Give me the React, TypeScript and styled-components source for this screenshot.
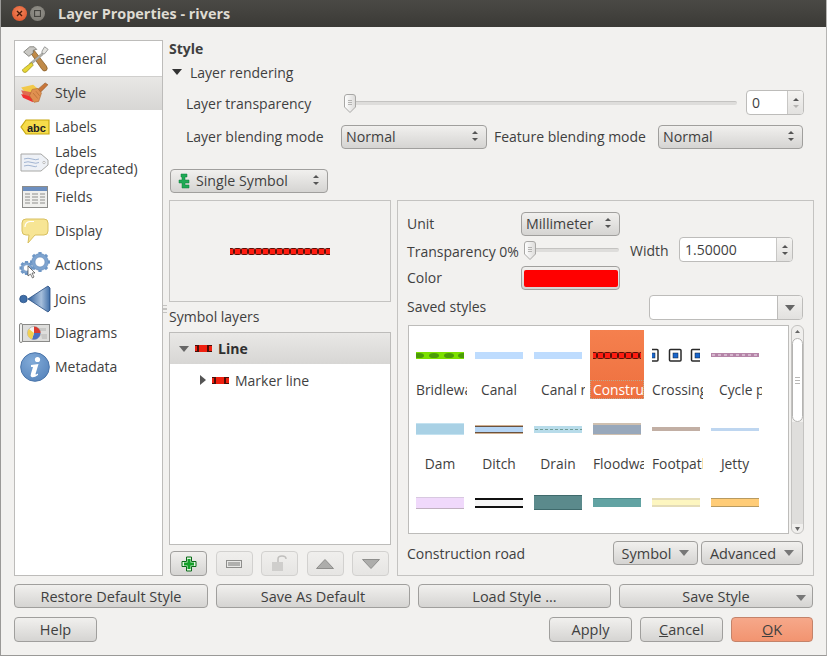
import React from "react";
import styled, { createGlobalStyle } from "styled-components";

const Global = createGlobalStyle`
html, body { margin: 0; padding: 0; background: #f2f1ef; }
* { box-sizing: border-box; }
`

const Win = styled.div`
width: 827px;
height: 656px;
display: flex;
flex-direction: column;
overflow: hidden;
background: #f2f1ef;
border-left: 1px solid #9a9997;
border-right: 1px solid #b5b4b2;
border-bottom: 1px solid #9a9997;
font-family: "Open Sans", "Noto Sans", sans-serif;
font-size: 14px;
color: #3f3f3f;
`
const TitleBar = styled.div`
height: 27px;
margin: 0 -1px;
flex: none;
display: flex;
align-items: center;
padding-left: 12px;
background: linear-gradient(#4a4945, #3b3a36);
`
const WinDot = styled.div<{ $close?: boolean }>`
width: 15px;
height: 15px;
border-radius: 50%;
margin-right: 3px;
display: flex;
align-items: center;
justify-content: center;
background: ${p => p.$close ? "radial-gradient(circle at 50% 40%, #f28a5f, #dd4a22)" : "radial-gradient(circle at 50% 40%, #94928b, #7a7871)"};
`
const Title = styled.div`
margin-left: 10px;
font-weight: 700;
font-size: 14.4px;
color: #dfdbd2;
`
const Body = styled.div`
flex: 1;
display: flex;
flex-direction: column;
padding: 13px 13px 0 13px;
`
const Main = styled.div`
display: flex;
height: 536px;
`
const SideList = styled.div`
width: 149px;
flex: none;
padding-top: 1px;
background: #fff;
border: 1px solid #bdbcba;
`
const SideItem = styled.div<{ $active?: boolean; $tall?: boolean }>`
height: ${p => p.$tall ? 36 : 34}px;
display: flex;
align-items: center;
gap: 4px;
padding-left: 3px;
line-height: 17px;
${p => p.$active && "background: linear-gradient(#e8e7e5, #d8d7d5); border-top: 1px solid #d0cfcd;"}
`
const IconBox = styled.div`
width: 33px;
height: 32px;
flex: none;
display: flex;
align-items: center;
justify-content: center;
`
const PageName = styled.div<{ $tall?: boolean }>`
white-space: pre-line;
padding-bottom: ${p => p.$tall ? 4 : 2}px;
`
const Right = styled.div`
flex: 1;
margin-left: 6px;
display: flex;
flex-direction: column;
`
const Heading = styled.div`
height: 18px;
font-weight: 700;
line-height: 18px;
`
const Collapse = styled.div`
margin-top: 5px;
height: 20px;
display: flex;
align-items: center;
gap: 8px;
padding: 0 0 2px 3px;
`
const DownTri = styled.div<{ $color?: string }>`
width: 0;
height: 0;
border-left: 5px solid transparent;
border-right: 5px solid transparent;
border-top: 6px solid ${p => p.$color || "#333"};
`
const RightTri = styled.div`
width: 0;
height: 0;
border-top: 5px solid transparent;
border-bottom: 5px solid transparent;
border-left: 6px solid #555;
`
const TransRow = styled.div`
margin-top: 7px;
height: 25px;
display: flex;
align-items: center;
padding-left: 17px;
`
const BlendRow = styled.div`
margin-top: 10px;
height: 24px;
display: flex;
align-items: center;
padding-left: 17px;
`
const Label = styled.div<{ $w?: number; $ml?: number; $drop?: number }>`
flex: none;
white-space: nowrap;
${p => p.$w ? `width: ${p.$w}px;` : ""}
${p => p.$ml ? `margin-left: ${p.$ml}px;` : ""}
${p => p.$drop ? `padding-top: ${p.$drop}px;` : "padding-bottom: 2px;"}
`
const Btn = styled.div<{ $w?: number; $h?: number; $ok?: boolean; $off?: boolean }>`
flex: none;
width: ${p => p.$w ? `${p.$w}px` : "auto"};
height: ${p => p.$h || 24}px;
display: flex;
align-items: center;
justify-content: center;
position: relative;
white-space: nowrap;
font-size: 14.5px;
border-radius: 4px;
border: 1px solid ${p => p.$ok ? "#c4836a" : p.$off ? "#d2d1cf" : "#a09f9d"};
background: ${p => p.$ok ? "linear-gradient(#f6a88a, #f29470)" : p.$off ? "linear-gradient(#f0efed, #e6e5e3)" : "linear-gradient(#f1f0ee, #d5d4d2)"};
`
const Combo = styled(Btn)`
justify-content: space-between;
font-size: 14.2px;
padding: 0 7px 2px 4px;
`
const ArrowBtnText = styled.span`
margin-left: 8px;
`
const Track = styled.div<{ $w: number }>`
position: relative;
flex: none;
width: ${p => p.$w}px;
height: 4px;
border-radius: 2px;
background: #dedddb;
border-top: 1px solid #c4c3c1;
`
const Thumb = styled.div`
position: absolute;
left: 0;
top: -8px;
`
const Spin = styled.div<{ $w: number; $ml?: number }>`
flex: none;
width: ${p => p.$w}px;
margin-left: ${p => p.$ml || 0}px;
height: 25px;
display: flex;
background: #fff;
border: 1px solid #bdbcba;
border-radius: 4px;
overflow: hidden;
`
const SpinText = styled.div`
flex: 1;
padding-left: 5px;
line-height: 23px;
`
const SpinBtns = styled.div`
width: 16px;
flex: none;
display: flex;
align-items: center;
justify-content: center;
border-left: 1px solid #c8c7c5;
background: linear-gradient(#f4f3f1, #e2e1df);
`
const TypeRow = styled.div`
margin-top: 20px;
padding-left: 1px;
`
const TypeIcon = styled.svg`
vertical-align: -3px;
margin: 0 5px 0 2px;
`
const Split = styled.div`
margin-top: 7px;
flex: 1;
display: flex;
gap: 6px;
`
const LeftCol = styled.div`
width: 222px;
flex: none;
display: flex;
flex-direction: column;
position: relative;
`
const Preview = styled.div`
height: 102px;
display: flex;
align-items: center;
justify-content: center;
border: 1px solid #c4c3c1;
`
const Grip = styled.div`
position: absolute;
left: -6px;
top: 105px;
width: 4px;
height: 8px;
border-top: 1px solid #c4c3c1;
border-bottom: 1px solid #c4c3c1;
background: linear-gradient(transparent 40%, #c4c3c1 40%, #c4c3c1 60%, transparent 60%);
`
const SubLabel = styled.div`
height: 30px;
line-height: 30px;
`
const Tree = styled.div`
height: 213px;
background: #fff;
border: 1px solid #bdbcba;
`
const TreeHead = styled.div`
height: 31px;
display: flex;
align-items: center;
padding-left: 9px;
gap: 6px;
font-weight: 700;
color: #2f2f2f;
background: linear-gradient(#e9e8e6, #d7d6d4);
`
const TreeRow = styled.div`
height: 33px;
display: flex;
align-items: center;
padding: 0 0 1px 30px;
gap: 6px;
`
const Tools = styled.div`
margin-top: 6px;
padding-left: 1px;
display: flex;
gap: 8.5px;
`
const Group = styled.div`
width: 417px;
flex: none;
padding: 11px 10px 0 9px;
border: 1px solid #c4c3c1;
display: flex;
flex-direction: column;
`
const GRow = styled.div<{ $mt?: number }>`
display: flex;
align-items: center;
margin-top: ${p => p.$mt || 0}px;
`
const Swatch = styled.div`
width: 94px;
height: 17px;
border-radius: 2px;
background: #ff0000;
`
const ListRow = styled.div`
margin: 5px 0 0 1px;
display: flex;
gap: 2px;
`
const SymbolList = styled.div`
width: 381px;
height: 209px;
overflow: hidden;
flex: none;
background: #fff;
border: 1px solid #bdbcba;
padding: 4px 0 0 4px;
display: grid;
grid-template-columns: repeat(6, 54px);
grid-auto-rows: 69px;
column-gap: 5px;
row-gap: 5px;
font-size: 13.8px;
`
const Cell = styled.div<{ $sel?: boolean }>`
width: 54px;
${p => p.$sel && "background: linear-gradient(#f5804e, #ee703f); color: #fff;"}
`
const CellArt = styled.div`
height: 50px;
display: flex;
align-items: center;
justify-content: center;
`
const CellName = styled.div<{ $pad?: number; $center?: boolean; $sel?: boolean }>`
height: 19px;
line-height: 20px;
overflow: hidden;
white-space: nowrap;
text-align: ${p => p.$center ? "center" : "left"};
padding-left: ${p => p.$pad || 0}px;
${p => p.$sel && "outline: 1px dotted #b8a890; outline-offset: -1px;"}
`
const Scroll = styled.div`
width: 13px;
flex: none;
height: 209px;
border: 1px solid #c4c3c1;
border-radius: 6px;
display: flex;
flex-direction: column;
align-items: center;
background: #f0efed;
padding-top: 3px;
`
const ScrollThumb = styled.div`
width: 11px;
height: 84px;
margin-top: 3px;
border: 1px solid #b5b4b2;
border-radius: 6px;
background: #fff;
display: flex;
align-items: center;
justify-content: center;
`
const ScrollGap = styled.div`
flex: 1;
background: #dfdedc;
width: 11px;
`
const Ridges = styled.div`
width: 5px;
height: 7px;
border-top: 1px solid #b8b7b5;
border-bottom: 1px solid #b8b7b5;
background: linear-gradient(transparent 40%, #b8b7b5 40%, #b8b7b5 60%, transparent 60%);
`
const Spacer = styled.div`
flex: 1;
`
const FootRow = styled.div<{ $mt: number }>`
display: flex;
gap: 8px;
margin-top: ${p => p.$mt}px;
`
const MenuCaret = styled.div`
position: absolute;
right: 6px;
top: 10px;
`
const DropPart = styled.div`
width: 25px;
flex: none;
display: flex;
align-items: center;
justify-content: center;
border-left: 1px solid #bdbcba;
background: linear-gradient(#f3f2f0, #e2e1df);
`
const SideGapBtn = styled(Btn)`
margin-left: 3px;
`

const UpDown = ({ faint }: { faint?: boolean }) =>
    <svg width="8" height="14" viewBox="0 0 8 14">
        <path d="M4 2 L7 5 H1 Z" fill="#555" />
        <path d="M4 12 L7 9 H1 Z" fill={faint ? "#b5b4b2" : "#555"} />
    </svg>

const SliderKnob = () =>
    <svg width="12" height="19" viewBox="0 0 12 19">
        <defs>
            <linearGradient id="knob" x1="0" x2="1" y1="0" y2="0">
                <stop offset="0" stopColor="#fff" />
                <stop offset="1" stopColor="#dcdbd9" />
            </linearGradient>
        </defs>
        <path d="M3 .5 H9 Q11.5 .5 11.5 3 V13 L6 18.5 L.5 13 V3 Q.5 .5 3 .5 Z" fill="url(#knob)" stroke="#a8a7a5" />
        <path d="M4 6.5 H8 M4 8.5 H8 M4 10.5 H8" stroke="#b5b4b2" />
    </svg>

// row of red beads used by the line symbols
const Beads = ({ width, height = 7 }: { width: number; height?: number }) => {
    const items = []
    for (let x = -3; x < width; x += 7) items.push(x)
    return (
        <svg width={width} height={height} viewBox={`0 0 ${width} ${height}`}>
            {items.map(x => <rect key={x} x={x + .5} y=".5" width="6" height={height - 1} rx=".8" fill="#ff1c10" stroke="#5a1008" />)}
        </svg>
    )
}

const SmallBeads = () =>
    <svg width="17" height="7" viewBox="0 0 17 7">
        <rect width="17" height="7" fill="#4a0f08" />
        <rect x="0" y="1" width="2" height="5" fill="#f02010" />
        <rect x="4" y="0" width="8" height="7" fill="#f02010" />
        <rect x="14" y="1" width="3" height="5" fill="#f02010" />
    </svg>

type Band = [number, number, string]

const Stripes = ({ bands, overlay }: { bands: Band[]; overlay?: React.ReactNode }) =>
    <svg width="48" height="24" viewBox="0 0 48 24">
        {bands.map(([y, h, c], i) => <rect key={i} x="0" y={y} width="48" height={h} fill={c} />)}
        {overlay}
    </svg>

const Crossing = () =>
    <svg width="48" height="24" viewBox="0 0 48 24">
        {[-6, 17, 39].map(x =>
            <g key={x}>
                <rect x={x + .5} y="6.5" width="11.5" height="11.5" rx="1" fill="#fff" stroke="#2a2a2a" strokeWidth="1.5" />
                <rect x={x + 4} y="10" width="5" height="5" fill="#1a66cc" stroke="#123" strokeWidth=".5" />
            </g>)}
    </svg>

const art: Record<string, React.ReactNode> = {
    bridle: <Stripes bands={[[9, 7, "#7de000"]]} overlay={[0, 15, 30, 44].map(x => <ellipse key={x} cx={x + 3} cy="12.5" rx="5" ry="2.6" fill="#4c9c08" />)} />,
    canal: <Stripes bands={[[9, 7, "#bedcfe"]]} />,
    beads: <Beads width={48} />,
    crossing: <Crossing />,
    cycle: <Stripes bands={[[10, 4, "#b585a8"]]} overlay={[1, 7, 13, 19, 25, 31, 37, 43].map(x => <rect key={x} x={x} y="11.5" width="3" height="1" fill="#f6e8f2" />)} />,
    dam: <Stripes bands={[[6, 12, "#c4e2f0"], [7, 10, "#a9d1e5"]]} />,
    ditch: <Stripes bands={[[9, 7, "#b5d5f5"], [9, 1, "#6a5240"], [15, 1, "#6a5240"], [8, 1, "#d0b090"], [16, 1, "#d0b090"]]} />,
    drain: <Stripes bands={[[9, 7, "#b8dcea"]]} overlay={[1, 6, 11, 16, 21, 26, 31, 36, 41, 46].map(x => <rect key={x} x={x} y="12" width="3" height="1" fill="#6f9a94" />)} />,
    flood: <Stripes bands={[[6, 12, "#cfc0b0"], [8, 9, "#98a8bb"]]} />,
    foot: <Stripes bands={[[10, 4, "#c2afa4"]]} />,
    jetty: <Stripes bands={[[11, 3, "#bed6f0"]]} />,
    purple: <Stripes bands={[[6, 12, "#f0d9fb"], [17, 1, "#c0b0c0"], [6, 1, "#d8c8e0"]]} />,
    road: <Stripes bands={[[8, 1, "#111"], [9, 6, "#f6f6f6"], [15, 2, "#111"], [7, 1, "#111"]]} />,
    teal: <Stripes bands={[[4, 15, "#5b8a8c"], [4, 1, "#3f6a6c"], [18, 1, "#3f6a6c"]]} />,
    teal2: <Stripes bands={[[7, 9, "#62a3a3"], [7, 1, "#4f8a8a"]]} />,
    pale: <Stripes bands={[[7, 9, "#fdf6c0"], [7, 2, "#e4dcb8"], [14, 2, "#e4dcb8"]]} />,
    orange: <Stripes bands={[[7, 9, "#ffcc77"], [7, 1, "#b89a60"], [15, 1, "#b89a60"]]} />,
}

const symbols = [
    { art: "bridle", name: "Bridleway", pad: 3 },
    { art: "canal", name: "Canal", center: true },
    { art: "canal", name: "Canal river", pad: 10 },
    { art: "beads", name: "Construction", pad: 3, sel: true },
    { art: "crossing", name: "Crossing", pad: 3 },
    { art: "cycle", name: "Cycle path", pad: 11 },
    { art: "dam", name: "Dam", center: true },
    { art: "ditch", name: "Ditch", center: true },
    { art: "drain", name: "Drain", center: true },
    { art: "flood", name: "Floodway", pad: 3 },
    { art: "foot", name: "Footpath", pad: 3 },
    { art: "jetty", name: "Jetty", center: true },
    { art: "purple", name: "" },
    { art: "road", name: "" },
    { art: "teal", name: "" },
    { art: "teal2", name: "" },
    { art: "pale", name: "" },
    { art: "orange", name: "" },
]

const GeneralIcon = () =>
    <svg width="28" height="28" viewBox="0 0 32 32">
        <path d="M11 9 L15 6 L29 24 Q31 27 29 29 Q26 31 24 28 Z" fill="#c08a48" stroke="#7d5420" strokeWidth=".8" />
        <path d="M3 8 L10 2 L15 2 L18 5 L14 6 L14 9 L9 13 Z" fill="#c9c8c4" stroke="#66655f" strokeWidth=".8" />
        <path d="M27 2 L31 5 L27 10 L24 10 L24 7 Z" fill="#e4e4e0" stroke="#777" strokeWidth=".8" />
        <path d="M24 9 L25.5 11 L11 23 L9.5 21 Z" fill="#b0b0aa" stroke="#777" strokeWidth=".4" />
        <path d="M12 20 L14 23 L6 31 Q3 32 2 30 Q1 28 3 27 Z" fill="#e8d838" stroke="#9a8a18" strokeWidth=".8" />
    </svg>

const StyleIcon = () =>
    <svg width="30" height="24" viewBox="0 0 32 26">
        <path d="M1 6 L14 3 L20 8 L12 20 Z" fill="#f2c94a" />
        <path d="M1 9 L12 11 L14 20 L4 16 Z" fill="#e06a50" />
        <path d="M1 13 L12 16 L14 22 L3 17 Z" fill="#f03030" />
        <path d="M27 1 L30 3 L22 11 L19 8 Z" fill="#c8763a" stroke="#8a5020" strokeWidth=".6" />
        <path d="M13 8 L19 7 L23 12 L20 21 L15 22 L10 15 Z" fill="#e09050" stroke="#b06a30" strokeWidth=".7" />
        <path d="M14 12 L19 18 M17 10 L21 15" stroke="#b06a30" strokeWidth=".7" />
    </svg>

const AbcIcon = () =>
    <svg width="30" height="17" viewBox="0 0 30 17">
        <path d="M6 1 H29 V15 H6 L1 8 Z" fill="#f6dc4a" stroke="#c8a810" strokeWidth="1.2" />
        <text x="7" y="12.5" fontFamily="Liberation Sans" fontWeight="700" fontSize="11" fill="#222">abc</text>
    </svg>

const TagIcon = () =>
    <svg width="29" height="19" viewBox="0 0 29 19">
        <path d="M1 1 H21 L28 7 V12 L21 18 H1 Z" fill="#eef1f6" stroke="#a8a8a6" />
        <circle cx="24" cy="9.5" r="1.2" fill="#fff" stroke="#999" strokeWidth=".6" />
        <path d="M4 6 Q8 4.5 12 6 T19 6 M4 9.5 Q8 8 12 9.5 T19 9.5 M4 13 Q8 11.5 12 13 T17 13" stroke="#8ea4c8" fill="none" strokeWidth=".8" />
    </svg>

const TableIcon = () =>
    <svg width="26" height="22" viewBox="0 0 26 22">
        <rect x=".5" y=".5" width="25" height="21" fill="#f0f0ee" stroke="#8c8c8a" />
        <rect x="1" y="1" width="24" height="4" fill="#6d8fc0" />
        {[8, 11, 14, 17].map(y => <path key={y} d={`M3 ${y} H8 M10 ${y} H16 M18 ${y} H23`} stroke="#8e8e8c" strokeWidth="1.1" />)}
    </svg>

const BubbleIcon = () =>
    <svg width="28" height="26" viewBox="0 0 28 26">
        <path d="M5 1 H23 Q27 1 27 5 V13 Q27 17 23 17 H14 L7 25 L8 17 H5 Q1 17 1 13 V5 Q1 1 5 1 Z" fill="#f7e594" stroke="#d8c060" />
        <path d="M4 9 Q4 4 9 3.5 H13" stroke="#fff" strokeWidth="1.2" fill="none" />
    </svg>

const Gear = ({ cx, cy, r, hole }: { cx: number; cy: number; r: number; hole: number }) =>
    <g>
        {[0, 45, 90, 135].map(a => <rect key={a} x={cx - 1.6} y={cy - r} width="3.2" height={r * 2} fill="#6f98c8" transform={`rotate(${a} ${cx} ${cy})`} />)}
        <circle cx={cx} cy={cy} r={r - 1.6} fill="#7ea4d0" stroke="#5f86b5" strokeWidth=".5" />
        <circle cx={cx} cy={cy} r={hole} fill="#fff" stroke="#5f86b5" strokeWidth=".6" />
    </g>

const GearsIcon = () =>
    <svg width="32" height="27" viewBox="0 0 32 27">
        <Gear cx={21} cy={10} r={10} hole={5} />
        <Gear cx={7.5} cy={16} r={7} hole={3.2} />
        <path d="M9 14 L9 24 L11.5 22 L13.5 26 L15 25 L13 21 L16 21 Z" fill="#fff" stroke="#444" strokeWidth=".7" />
    </svg>

const JoinIcon = () =>
    <svg width="32" height="28" viewBox="0 0 32 28">
        <defs>
            <linearGradient id="join" x1="0" x2="1" y1="0" y2="0">
                <stop offset="0" stopColor="#2f5f9c" />
                <stop offset=".6" stopColor="#a8c0dc" />
                <stop offset="1" stopColor="#3f6ea8" />
            </linearGradient>
        </defs>
        <circle cx="4.5" cy="14" r="3.8" fill="#3f6ea8" stroke="#234a80" strokeWidth=".7" />
        <path d="M9 14 L29 1 L31 3 V25 L29 27 Z" fill="url(#join)" stroke="#234a80" strokeWidth=".8" />
    </svg>

const DiagramIcon = () =>
    <svg width="31" height="20" viewBox="0 0 31 20">
        <rect x="2.5" y="1.5" width="28" height="17" fill="#dededc" stroke="#8a8a88" />
        <rect x=".5" y=".5" width="3" height="19" rx="1.5" fill="#f0f0ee" stroke="#8a8a88" />
        <path d="M19 5 h8 v3 h-6 z M22 11 h6 v5 h-5 z" fill="#c8c8c6" />
        <circle cx="15" cy="10" r="6.5" fill="#f4f4f2" stroke="#888" strokeWidth=".5" />
        <path d="M15 10 V3.5 A6.5 6.5 0 0 1 21.5 10 Z" fill="#d83a30" />
        <path d="M15 10 H21.5 A6.5 6.5 0 0 1 13 16.2 Z" fill="#4a6ec0" />
        <path d="M15 10 L13 16.2 A6.5 6.5 0 0 1 10 6 Z" fill="#f2d050" />
    </svg>

const InfoIcon = () =>
    <svg width="30" height="30" viewBox="0 0 30 30">
        <defs>
            <radialGradient id="inf" cx=".4" cy=".3" r=".8">
                <stop offset="0" stopColor="#82abd8" />
                <stop offset="1" stopColor="#5583bb" />
            </radialGradient>
        </defs>
        <circle cx="15" cy="15" r="14.3" fill="url(#inf)" stroke="#4a75aa" />
        <circle cx="17.5" cy="7.5" r="2.6" fill="#fff" />
        <path d="M11 13 L18.5 12 L15.5 22 Q15.5 23 18 21.5 L18 23 Q14 26 11.5 25 Q10 24 11 21.5 L13 15 L11 15 Z" fill="#fff" />
    </svg>

const pages = [
    { name: "General", icon: <GeneralIcon /> },
    { name: "Style", icon: <StyleIcon />, active: true },
    { name: "Labels", icon: <AbcIcon /> },
    { name: "Labels\n(deprecated)", icon: <TagIcon />, tall: true },
    { name: "Fields", icon: <TableIcon /> },
    { name: "Display", icon: <BubbleIcon /> },
    { name: "Actions", icon: <GearsIcon /> },
    { name: "Joins", icon: <JoinIcon /> },
    { name: "Diagrams", icon: <DiagramIcon /> },
    { name: "Metadata", icon: <InfoIcon /> },
]

export default function App() {
    return (
        <Win>
            <Global />
            <TitleBar>
                <WinDot $close>
                    <svg width="7" height="7" viewBox="0 0 7 7"><path d="M1 1 L6 6 M6 1 L1 6" stroke="#4a1a08" strokeWidth="1.4" /></svg>
                </WinDot>
                <WinDot>
                    <svg width="7" height="7" viewBox="0 0 7 7"><rect x=".5" y=".5" width="6" height="6" fill="none" stroke="#45443f" strokeWidth="1.2" /></svg>
                </WinDot>
                <Title>Layer Properties - rivers</Title>
            </TitleBar>
            <Body>
                <Main>
                    <SideList>
                        {pages.map(p =>
                            <SideItem key={p.name} $active={p.active} $tall={p.tall}>
                                <IconBox>{p.icon}</IconBox>
                                <PageName $tall={p.tall}>{p.name}</PageName>
                            </SideItem>)}
                    </SideList>
                    <Right>
                        <Heading>Style</Heading>
                        <Collapse><DownTri />Layer rendering</Collapse>
                        <TransRow>
                            <Label $w={158} $drop={1}>Layer transparency</Label>
                            <Track $w={393}><Thumb><SliderKnob /></Thumb></Track>
                            <Spin $w={58} $ml={9}>
                                <SpinText>0</SpinText>
                                <SpinBtns><UpDown faint /></SpinBtns>
                            </Spin>
                        </TransRow>
                        <BlendRow>
                            <Label $w={155}>Layer blending mode</Label>
                            <Combo $w={146}>Normal<UpDown /></Combo>
                            <Label $ml={7} $w={164}>Feature blending mode</Label>
                            <Combo $w={145}>Normal<UpDown /></Combo>
                        </BlendRow>
                        <TypeRow>
                            <Combo $w={158}>
                                <span>
                                    <TypeIcon width="14" height="16" viewBox="0 0 14 16">
                                        <path d="M4 1 H10 V4 H8 V7 H12 V10 H8 V12 H12 V15 H5 V10 H2 V7 H5 V4 H4 Z" fill="#1faa55" stroke="#0f7a38" strokeWidth=".5" />
                                    </TypeIcon>
                                    Single Symbol
                                </span>
                                <UpDown />
                            </Combo>
                        </TypeRow>
                        <Split>
                            <LeftCol>
                                <Preview><Beads width={100} /></Preview>
                                <Grip />
                                <SubLabel>Symbol layers</SubLabel>
                                <Tree>
                                    <TreeHead><DownTri $color="#666" /><SmallBeads />Line</TreeHead>
                                    <TreeRow><RightTri /><SmallBeads />Marker line</TreeRow>
                                </Tree>
                                <Tools>
                                    <Btn $w={37} $h={25}>
                                        <svg width="16" height="16" viewBox="0 0 16 16">
                                            <path d="M5.5 1 H10.5 V5.5 H15 V10.5 H10.5 V15 H5.5 V10.5 H1 V5.5 H5.5 Z" fill="#dff5df" stroke="#0a6a18" strokeWidth="1" />
                                            <path d="M6.5 3 H9.5 V6.5 H13 V9.5 H9.5 V13 H6.5 V9.5 H3 V6.5 H6.5 Z" fill="#12a028" />
                                        </svg>
                                    </Btn>
                                    <Btn $w={37} $h={25} $off>
                                        <svg width="16" height="8" viewBox="0 0 16 8"><rect x=".5" y=".5" width="15" height="7" fill="#e8e8e6" stroke="#8e8e8c" /><rect x="2" y="2" width="12" height="4" fill="#b0b0ae" /></svg>
                                    </Btn>
                                    <Btn $w={37} $h={25} $off>
                                        <svg width="16" height="17" viewBox="0 0 16 17"><path d="M6 7 V4 Q6 1 10 1 Q14 1 14 4" fill="none" stroke="#c0bfbd" strokeWidth="1.5" /><rect x="0" y="7" width="11" height="9" fill="#cfcecc" /></svg>
                                    </Btn>
                                    <Btn $w={37} $h={25} $off>
                                        <svg width="18" height="10" viewBox="0 0 18 10"><path d="M9 .5 L17.5 9.5 H.5 Z" fill="#adadab" stroke="#8e8e8c" /></svg>
                                    </Btn>
                                    <Btn $w={37} $h={25} $off>
                                        <svg width="18" height="10" viewBox="0 0 18 10"><path d="M9 9.5 L17.5 .5 H.5 Z" fill="#adadab" stroke="#8e8e8c" /></svg>
                                    </Btn>
                                </Tools>
                            </LeftCol>
                            <Group>
                                <GRow>
                                    <Label $w={114}>Unit</Label>
                                    <Combo $w={99}>Millimeter<UpDown /></Combo>
                                </GRow>
                                <GRow $mt={1}>
                                    <Label $w={117} $drop={4}>Transparency 0%</Label>
                                    <Track $w={95}><Thumb><SliderKnob /></Thumb></Track>
                                    <Label $ml={11} $w={49} $drop={2}>Width</Label>
                                    <Spin $w={114}>
                                        <SpinText>1.50000</SpinText>
                                        <SpinBtns><UpDown /></SpinBtns>
                                    </Spin>
                                </GRow>
                                <GRow $mt={4}>
                                    <Label $w={114}>Color</Label>
                                    <Btn $w={99}><Swatch /></Btn>
                                </GRow>
                                <GRow $mt={5}>
                                    <Label $w={242}>Saved styles</Label>
                                    <Spin $w={154}>
                                        <Spacer />
                                        <DropPart><DownTri $color="#666" /></DropPart>
                                    </Spin>
                                </GRow>
                                <ListRow>
                                    <SymbolList>
                                        {symbols.map((s, i) =>
                                            <Cell key={i} $sel={s.sel}>
                                                <CellArt>{art[s.art]}</CellArt>
                                                <CellName $pad={s.pad} $center={s.center} $sel={s.sel}>{s.name}</CellName>
                                            </Cell>)}
                                    </SymbolList>
                                    <Scroll>
                                        <svg width="7" height="6" viewBox="0 0 7 6"><path d="M3.5 1 L6 4 H1 Z" fill="#666" /></svg>
                                        <ScrollThumb><Ridges /></ScrollThumb>
                                        <ScrollGap />
                                        <svg width="7" height="9" viewBox="0 0 7 9"><path d="M3.5 7 L6 3 H1 Z" fill="#666" /></svg>
                                    </Scroll>
                                </ListRow>
                                <GRow $mt={7}>
                                    <Label $w={206} $drop={1}>Construction road</Label>
                                    <Btn $w={85}><span>Symbol</span><ArrowBtnText><DownTri $color="#777" /></ArrowBtnText></Btn>
                                    <SideGapBtn $w={102}><span>Advanced</span><ArrowBtnText><DownTri $color="#777" /></ArrowBtnText></SideGapBtn>
                                </GRow>
                            </Group>
                        </Split>
                    </Right>
                </Main>
                <FootRow $mt={8}>
                    <Btn $w={194}>Restore Default Style</Btn>
                    <Btn $w={194}>Save As Default</Btn>
                    <Btn $w={193}>Load Style ...</Btn>
                    <Btn $w={194}>Save Style<MenuCaret><DownTri $color="#777" /></MenuCaret></Btn>
                </FootRow>
                <FootRow $mt={9}>
                    <Btn $w={83} $h={25}>Help</Btn>
                    <Spacer />
                    <Btn $w={83} $h={25}>Apply</Btn>
                    <Btn $w={83} $h={25}><span><u>C</u>ancel</span></Btn>
                    <Btn $w={82} $h={25} $ok><span><u>O</u>K</span></Btn>
                </FootRow>
            </Body>
        </Win>
    );
}
